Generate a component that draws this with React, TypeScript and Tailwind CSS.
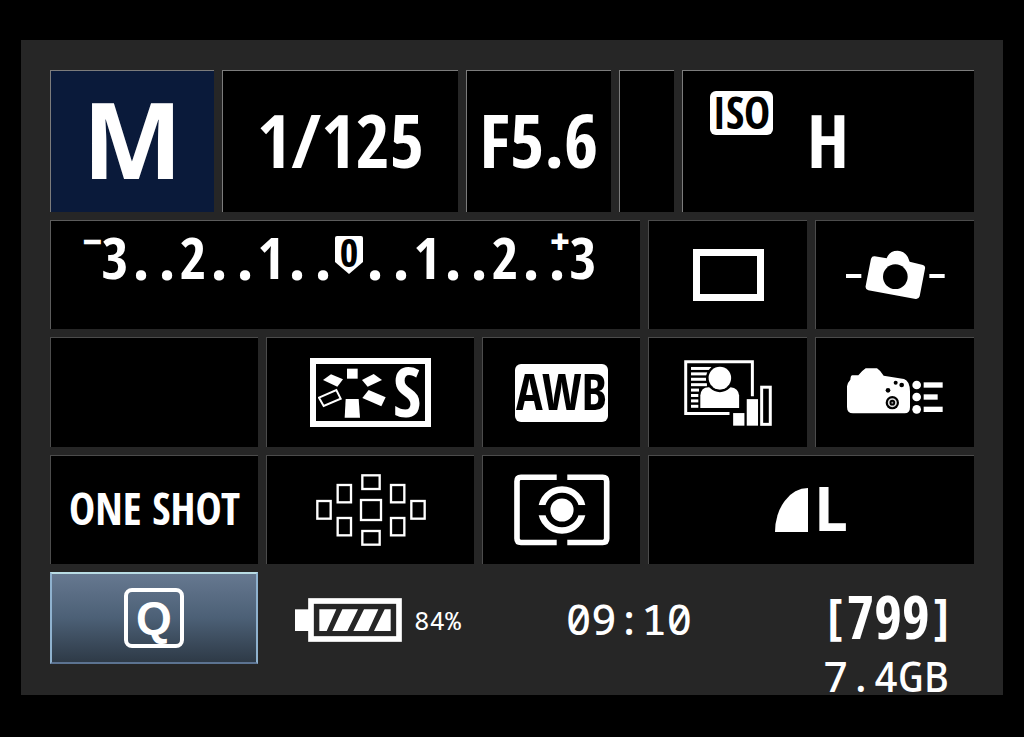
import type { ReactNode } from "react";
import clsx from "clsx";

const condensed = "font-['Open_Sans_Condensed','Liberation_Sans_Narrow',sans-serif]";
const mono = "font-['Noto_Sans_Mono','DejaVu_Sans_Mono',monospace]";
const wide = "font-['Open_Sans',sans-serif]";

const scale = ["3", ".", ".", "2", ".", ".", "1", ".", ".", "0", ".", ".", "1", ".", ".", "2", ".", ".", "3"];

function Cell({ children, className, label }: { children?: ReactNode; className?: string; label?: string }) {
    return (
        <div
            aria-label={label}
            className={clsx("flex border-t border-l min-w-0", className ?? "items-center justify-center border-[#4c4c4c] bg-black")}
        >
            {children}
        </div>
    );
}

function ExposureScale() {
    const sign = "absolute right-[26px] top-0 font-['Open_Sans',sans-serif] text-[34px] leading-[28px] font-extrabold";
    return (
        <div className={clsx("flex h-[60px] mt-[6px] ml-[51px] items-center font-bold", condensed)}>
            {scale.map((mark, i) => {
                if (mark === ".") {
                    return (
                        <span key={i} className={clsx("w-[26px] text-center text-[60px] leading-[60px]", wide)}>
                            .
                        </span>
                    );
                }
                if (mark === "0") {
                    return (
                        <span key={i} className="relative w-[26px] flex justify-center">
                            <svg className="absolute top-0 w-[28px] h-[38px]" viewBox="0 0 28 38">
                                <path d="M0 2Q0 0 2 0H26Q28 0 28 2V26L14 38L0 26Z" fill="#fff" />
                            </svg>
                            <span className="relative text-[40px] leading-[32px] h-[42px] text-black">0</span>
                        </span>
                    );
                }
                return (
                    <span key={i} className="relative w-[26px] flex justify-center text-[58px] leading-[60px]">
                        {i === 0 && <span className={sign}>−</span>}
                        {i === 18 && <span className={sign}>+</span>}
                        {mark}
                    </span>
                );
            })}
        </div>
    );
}

function LevelIcon() {
    return (
        <svg className="w-[99px] h-[50px]" viewBox="615 103 297 148" fill="#fff">
            <path d="M690 128Q693 120 701 121L737 127Q745 104 770 104Q798 106 806 137L846 147Q854 150 852 158L836 241Q833 250 824 249L682 223Q672 220 674 210Z" />
            <circle cx="763" cy="182" r="37" fill="#000" />
            <rect x="615" y="174" width="46" height="12" />
            <rect x="865" y="174" width="46" height="12" />
        </svg>
    );
}

function PictureStyleIcon() {
    return (
        <svg className="w-[68px] h-[50px] shrink-0" viewBox="172 94 204 150" fill="#fff">
            <rect x="259" y="96" width="32" height="30" />
            <path d="M187 130L211 113L247 128L230 150Z" />
            <path d="M364 130L339 112L304 130L321 150Z" />
            <path d="M175 183L227 160L240 186L189 208Z" fill="none" stroke="#fff" strokeWidth="6" />
            <path d="M324 160L375 182L362 209L305 184Z" />
            <path d="M255 187H294L298 243H252Z" />
        </svg>
    );
}

function LightingIcon() {
    const lines = [62, 50, 46, 48, 24, 22, 22, 22];
    return (
        <svg className="w-[88px] h-[66px]" viewBox="116 71 265 199" fill="#fff">
            <path d="M322 180V76H121V232H253" fill="none" stroke="#fff" strokeWidth="9" />
            {lines.map((w, i) => (
                <rect key={i} x="137" y={92 + i * 16.3} width={w} height="9" />
            ))}
            <path d="M165 216V178Q167 153 190 153H256Q280 155 282 178V216Z" />
            <circle cx="224" cy="126" r="38" fill="none" stroke="#000" strokeWidth="8" />
            <circle cx="224" cy="125" r="34" />
            <rect x="264" y="231" width="34" height="38" />
            <rect x="305" y="189" width="34" height="80" />
            <rect x="350" y="153" width="26" height="112" fill="none" stroke="#fff" strokeWidth="9" />
        </svg>
    );
}

function CustomControlsIcon() {
    return (
        <svg className="w-[96px] h-[46px] mb-1" viewBox="604 96 288 136" fill="#fff">
            <path d="M604 150Q606 138 614 130Q615 117 620 117H638Q648 104 660 96H694Q706 104 714 118L775 128Q792 133 793 165V213Q793 231 777 231H622Q604 231 604 212Z" />
            <g fill="#000">
                <circle cx="750" cy="139" r="6" />
                <circle cx="768" cy="146" r="7" />
                <circle cx="727" cy="162" r="7" />
                <circle cx="740" cy="199" r="20" />
            </g>
            <circle cx="740" cy="199" r="11" fill="none" stroke="#ddd" strokeWidth="5" />
            <circle cx="740" cy="199" r="3" fill="#999" />
            <circle cx="813" cy="146" r="13" />
            <circle cx="813" cy="182" r="13" />
            <circle cx="813" cy="219" r="13" />
            <rect x="834" y="138" width="57" height="16" />
            <rect x="834" y="174" width="42" height="16" />
            <rect x="834" y="211" width="57" height="16" />
        </svg>
    );
}

function AfPointsIcon() {
    return (
        <svg className="w-[110px] h-[72px]" viewBox="165 414 330 216" fill="none" stroke="#fff" strokeWidth="7">
            <rect x="304" y="418" width="52" height="41" />
            <rect x="230" y="447" width="40" height="52" />
            <rect x="390" y="447" width="40" height="52" />
            <rect x="169" y="495" width="40" height="53" />
            <rect x="451" y="495" width="40" height="53" />
            <rect x="300" y="492" width="60" height="60" />
            <rect x="230" y="546" width="40" height="52" />
            <rect x="390" y="546" width="40" height="52" />
            <rect x="304" y="585" width="52" height="41" />
        </svg>
    );
}

function MeteringIcon() {
    return (
        <svg className="w-[96px] h-[72px]" viewBox="99 414 290 216" fill="none" stroke="#fff">
            <path d="M228 423H120Q108 423 108 435V608Q108 620 120 620H228" strokeWidth="17" />
            <path d="M260 423H367Q379 423 379 435V608Q379 620 367 620H260" strokeWidth="17" />
            <circle cx="244" cy="522" r="62" strokeWidth="20" />
            <rect x="165" y="507" width="158" height="31" fill="#000" stroke="none" />
            <circle cx="244" cy="522" r="35" fill="#fff" stroke="none" />
        </svg>
    );
}

function BatteryIcon() {
    return (
        <svg className="w-[107px] h-[44px]" viewBox="105 116 321 132" fill="#fff">
            <rect x="105" y="150" width="44" height="65" />
            <rect x="153" y="125" width="264" height="114" fill="none" stroke="#fff" strokeWidth="17" />
            <path d="M178 150H229L200 215H178ZM247 150H294L262 215H217ZM312 150H355L325 215H280ZM374 150H392V215H342Z" />
        </svg>
    );
}

export default function App() {
    return (
        <div className="min-h-screen bg-black px-[21px] py-10 text-white">
            <main className="flex flex-col gap-2 bg-[#262626] px-[29px] pt-[30px]">
                <div className="grid grid-cols-[164fr_236fr_145fr_55fr_292fr] gap-2 h-[142px]">
                    <Cell className="items-center justify-center border-[#7c7c7c] bg-[#0a1a3a] pb-2">
                        <span className={clsx("text-[106px] leading-none font-bold", wide)}>M</span>
                    </Cell>
                    <Cell className="items-center justify-center border-[#7c7c7c] bg-black pb-1">
                        <span className={clsx("text-[74px] leading-none font-bold", condensed)}>1/125</span>
                    </Cell>
                    <Cell className="items-center justify-center border-[#7c7c7c] bg-black pb-1">
                        <span className={clsx("text-[74px] leading-none font-bold", condensed)}>F5.6</span>
                    </Cell>
                    <Cell className="border-[#7c7c7c] bg-black" />
                    <Cell className="items-center border-[#7c7c7c] bg-black pb-1">
                        <span
                            className={clsx(
                                "flex items-center justify-center self-start mt-[20px] ml-[27px] w-[63px] h-[44px] pb-[2px] rounded-md bg-white text-black text-[44px] font-bold",
                                condensed
                            )}
                        >
                            ISO
                        </span>
                        <span className={clsx("ml-[34px] text-[74px] leading-none font-bold", condensed)}>H</span>
                    </Cell>
                </div>

                <div className="grid grid-cols-[590fr_159fr_159fr] gap-2 h-[109px]">
                    <Cell className="items-start border-[#5c5c5c] bg-black" label="Exposure compensation">
                        <ExposureScale />
                    </Cell>
                    <Cell label="Single shooting">
                        <div className="w-[71px] h-[52px] border-[7px] border-white" />
                    </Cell>
                    <Cell label="Electronic level">
                        <LevelIcon />
                    </Cell>
                </div>

                <div className="grid grid-cols-[208fr_208fr_158fr_159fr_159fr] gap-2 h-[110px]">
                    <Cell />
                    <Cell label="Picture style">
                        <div className="flex items-center w-[121px] h-[69px] border-[6px] border-white pl-[2px] gap-[7px]">
                            <PictureStyleIcon />
                            <span className={clsx("text-[68px] leading-[60px] h-[64px]", condensed)}>S</span>
                        </div>
                    </Cell>
                    <Cell label="White balance">
                        <span
                            className={clsx(
                                "flex items-center justify-center w-[93px] h-[58px] pb-[2px] rounded-md bg-white text-black text-[50px] font-bold",
                                condensed
                            )}
                        >
                            AWB
                        </span>
                    </Cell>
                    <Cell label="Auto lighting optimizer">
                        <LightingIcon />
                    </Cell>
                    <Cell label="Custom controls">
                        <CustomControlsIcon />
                    </Cell>
                </div>

                <div className="grid grid-cols-[208fr_208fr_158fr_326fr] gap-2 h-[109px]">
                    <Cell>
                        <span className={clsx("pb-1 text-[44px] leading-none font-bold whitespace-nowrap", condensed)}>ONE SHOT</span>
                    </Cell>
                    <Cell label="AF points">
                        <AfPointsIcon />
                    </Cell>
                    <Cell label="Metering mode">
                        <MeteringIcon />
                    </Cell>
                    <Cell label="Image quality">
                        <svg className="w-[33px] h-[44px]" viewBox="0 0 33 44">
                            <path d="M0 44A33 44 0 0 1 33 0V44Z" fill="#fff" />
                        </svg>
                        <span className={clsx("pb-1 ml-[6px] text-[60px] leading-[60px] font-bold", wide)}>L</span>
                    </Cell>
                </div>

                <div className="grid grid-cols-[208fr_292fr_408fr] gap-2 h-[123px]">
                    <button
                        aria-label="Quick control"
                        className="flex items-center justify-center h-[92px] border-2 border-t-[#b9dce4] border-x-[#8fb2cf] border-b-[#5c7391] bg-linear-to-b from-[#667890] via-[#4c6076] to-[#2e3a47]"
                    >
                        <span className="flex items-center justify-center w-[60px] h-[60px] rounded-lg border-4 border-white font-['Liberation_Sans',sans-serif] text-[46px] leading-none font-bold">
                            Q
                        </span>
                    </button>
                    <div className="flex items-center h-[96px] pl-[29px] gap-3">
                        <BatteryIcon />
                        <span className={clsx("text-[26px]", mono)}>84%</span>
                    </div>
                    <div className="flex justify-between pr-[25px]">
                        <time className={clsx("text-[42px] leading-[94px] font-medium", mono)}>09:10</time>
                        <div className="flex flex-col items-end pt-[14px]">
                            <span className={clsx("flex items-center gap-1 h-[60px] text-[60px] font-bold", condensed)}>
                                <span className="text-[48px] font-light">[</span>
                                799
                                <span className="text-[48px] font-light">]</span>
                            </span>
                            <span className={clsx("pt-[6px] text-[42px] leading-[48px] font-medium", mono)}>7.4GB</span>
                        </div>
                    </div>
                </div>
            </main>
        </div>
    );
}
